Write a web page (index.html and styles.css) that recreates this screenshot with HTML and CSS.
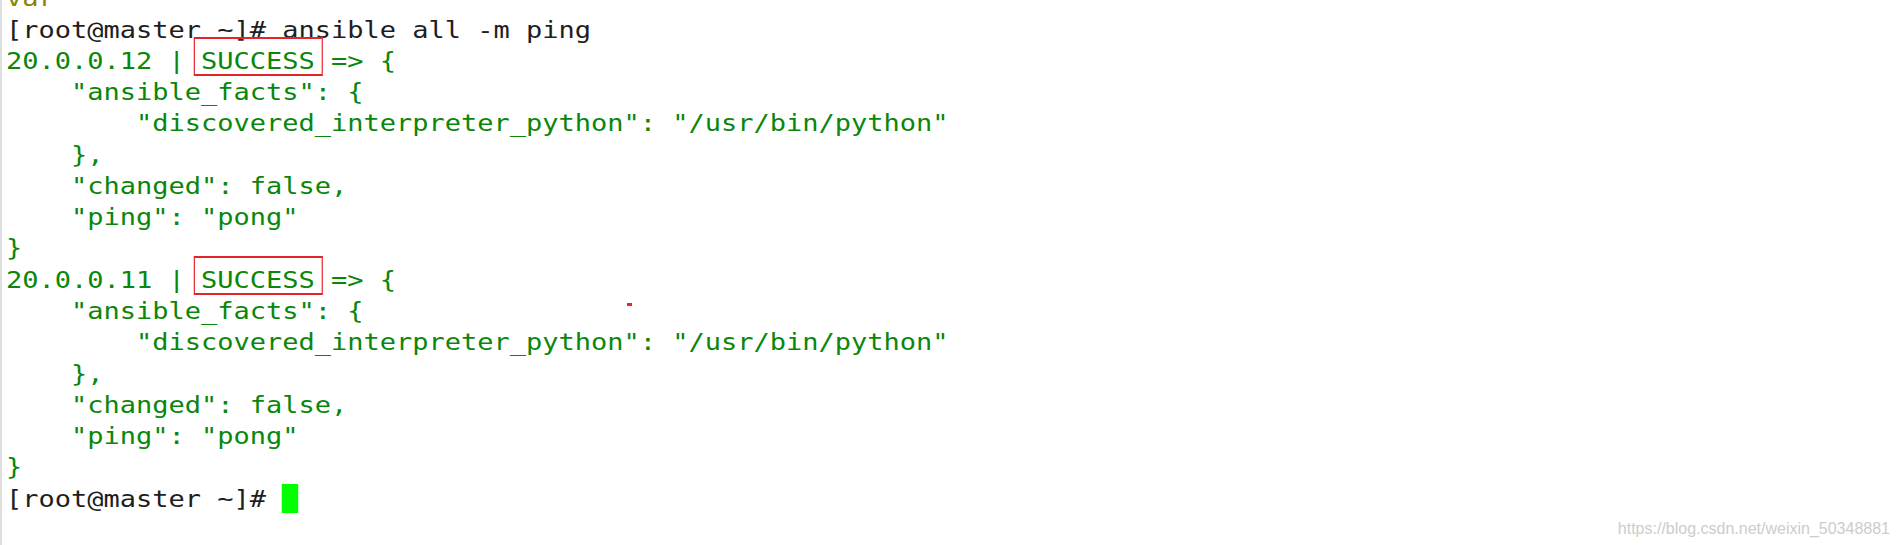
FILE: index.html
```html
<!DOCTYPE html>
<html>
<head>
<meta charset="utf-8">
<link rel="stylesheet" href="styles.css">
</head>
<body>
<div class="term">
<pre class="screen"><span class="old">var</span>
<span class="prompt">[root@master ~]# ansible all -m ping</span>
<span class="ok">20.0.0.12 | <span class="hl">SUCCESS</span> =&gt; {
    "ansible_facts": {
        "discovered_interpreter_python": "/usr/bin/python"
    },
    "changed": false,
    "ping": "pong"
}
20.0.0.11 | <span class="hl">SUCCESS</span> =&gt; {
    "ansible_facts": {
        "discovered_interpreter_python": "/usr/bin/python"
    },
    "changed": false,
    "ping": "pong"
}</span>
<span class="prompt">[root@master ~]# </span><span class="cursor"></span></pre>
<span class="dot"></span>
<span class="mark">https://blog.csdn.net/weixin_50348881</span>
</div>
</body>
</html>
```

FILE: styles.css
```css
html, body {
  margin: 0;
  padding: 0;
  background: #ffffff;
  width: 1898px;
  height: 545px;
  overflow: hidden;
}

.term {
  display: flow-root;
  position: relative;
  height: 545px;
  box-sizing: border-box;
  border-left: 2px solid #dedede;
}

.screen {
  width: max-content;
  margin: -16.7px 0 0 4px;
  font-family: "DejaVu Sans Mono", monospace;
  font-size: 23px;
  line-height: 31.27px;
  color: #1e1e1e;
  transform: scaleX(1.1735);
  transform-origin: 0 0;
}

.old {
  color: #8c8400;
}

.prompt {
  color: #1e1e1e;
}

.ok {
  color: #0a870a;
}

.hl {
  position: relative;
}

.hl::after {
  content: "";
  position: absolute;
  left: -6px;
  right: -7px;
  top: -10.5px;
  bottom: -2.5px;
  border: 2px solid #e3242b;
  border-left-width: 1.7px;
  border-right-width: 1.7px;
}

.cursor {
  display: inline-block;
  width: 13.85px;
  height: 29px;
  vertical-align: top;
  background: #00ff00;
}

.dot {
  position: absolute;
  left: 625px;
  top: 303px;
  width: 5px;
  height: 3px;
  background: #e8242a;
}

.mark {
  position: absolute;
  right: 8px;
  bottom: 7px;
  font-family: "Liberation Sans", Arial, sans-serif;
  font-size: 16px;
  color: #cccccc;
}
```
